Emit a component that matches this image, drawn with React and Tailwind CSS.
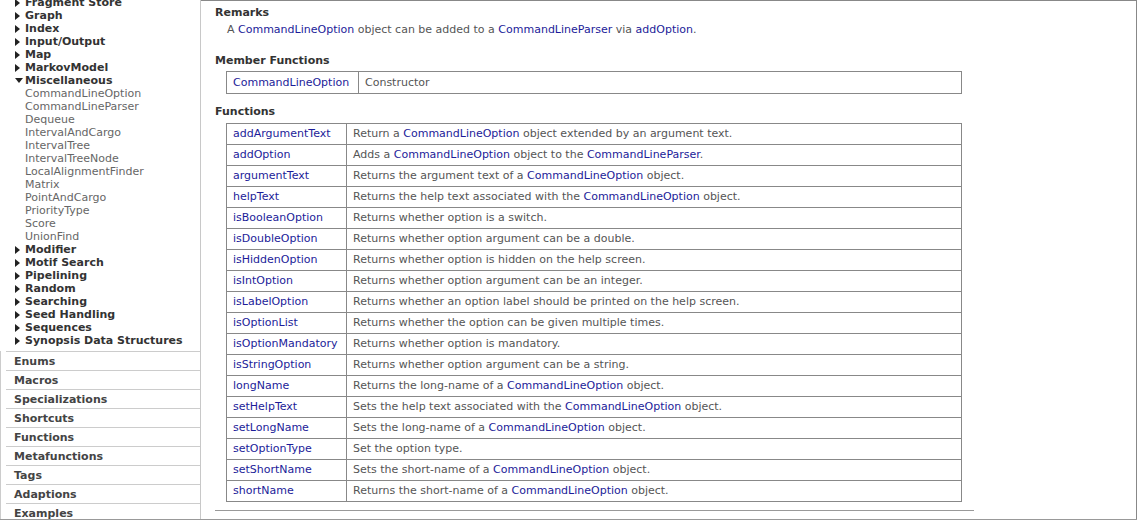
import React from "react";

const L = ({ children }) => <span className="text-[#1c1c99]">{children}</span>;
const CLO = <L>CommandLineOption</L>;

const fns = [
  ["addArgumentText", <>Return a {CLO} object extended by an argument text.</>],
  ["addOption", <>Adds a {CLO} object to the <L>CommandLineParser</L>.</>],
  ["argumentText", <>Returns the argument text of a {CLO} object.</>],
  ["helpText", <>Returns the help text associated with the {CLO} object.</>],
  ["isBooleanOption", <>Returns whether option is a switch.</>],
  ["isDoubleOption", <>Returns whether option argument can be a double.</>],
  ["isHiddenOption", <>Returns whether option is hidden on the help screen.</>],
  ["isIntOption", <>Returns whether option argument can be an integer.</>],
  ["isLabelOption", <>Returns whether an option label should be printed on the help screen.</>],
  ["isOptionList", <>Returns whether the option can be given multiple times.</>],
  ["isOptionMandatory", <>Returns whether option is mandatory.</>],
  ["isStringOption", <>Returns whether option argument can be a string.</>],
  ["longName", <>Returns the long-name of a {CLO} object.</>],
  ["setHelpText", <>Sets the help text associated with the {CLO} object.</>],
  ["setLongName", <>Sets the long-name of a {CLO} object.</>],
  ["setOptionType", <>Set the option type.</>],
  ["setShortName", <>Sets the short-name of a {CLO} object.</>],
  ["shortName", <>Returns the short-name of a {CLO} object.</>],
];

const groupsTop = ["Fragment Store", "Graph", "Index", "Input/Output", "Map", "MarkovModel"];
const misc = [
  "CommandLineOption", "CommandLineParser", "Dequeue", "IntervalAndCargo", "IntervalTree",
  "IntervalTreeNode", "LocalAlignmentFinder", "Matrix", "PointAndCargo", "PriorityType", "Score", "UnionFind",
];
const groupsBottom = ["Modifier", "Motif Search", "Pipelining", "Random", "Searching", "Seed Handling", "Sequences", "Synopsis Data Structures"];
const sections = ["Enums", "Macros", "Specializations", "Shortcuts", "Functions", "Metafunctions", "Tags", "Adaptions", "Examples"];

const Right = () => (
  <svg width="5" height="8" viewBox="0 0 5 8" className="shrink-0">
    <polygon points="0,0 5,4 0,8" fill="#222" />
  </svg>
);
const Down = () => (
  <svg width="8" height="5" viewBox="0 0 8 5" className="shrink-0">
    <polygon points="0,0 8,0 4,5" fill="#222" />
  </svg>
);

const Group = ({ name, open }) => (
  <div className="flex h-[13px] items-center pl-[15px] font-bold text-[#333]">
    <div className="flex w-[10px] items-center">{open ? <Down /> : <Right />}</div>
    <span>{name}</span>
  </div>
);

export default function App() {
  return (
    <div
      className="flex h-[520px] w-[1137px] overflow-hidden border-b border-[#999] bg-white text-[11px]"
      style={{ fontFamily: '"DejaVu Sans", Verdana, sans-serif' }}
    >
      <aside className="flex w-[201px] shrink-0 flex-col overflow-hidden border-r border-[#c8c8c8] leading-[13px]">
        <div className="mt-[-4px]">
          {groupsTop.map((g) => (
            <Group key={g} name={g} />
          ))}
          <Group name="Miscellaneous" open />
          {misc.map((m) => (
            <div key={m} className="h-[13px] pl-[25px] text-[#666]">
              {m}
            </div>
          ))}
          {groupsBottom.map((g) => (
            <Group key={g} name={g} />
          ))}
        </div>
        <div className="mt-[4px] border-l border-[#ccc]">
          {sections.map((s) => (
            <div key={s} className="ml-[5px] flex h-[19px] items-center border-t border-[#ccc] pl-[8px] font-bold text-[#444]">
              {s}
            </div>
          ))}
        </div>
      </aside>
      <main className="flex-1 border-r border-t border-[#888] pl-[14px] pt-[4px] leading-[16px] text-[#555]">
        <div className="font-bold text-[#333]">Remarks</div>
        <p className="mt-[1px] pl-[12px]">
          A {CLO} object can be added to a <L>CommandLineParser</L> via <L>addOption</L>.
        </p>
        <div className="mt-[15px] font-bold text-[#333]">Member Functions</div>
        <table className="ml-[11px] mt-[2px] w-[736px] border-collapse">
          <tbody>
            <tr className="h-[22px]">
              <td className="w-[132px] border border-[#888] px-[6px] py-0">{CLO}</td>
              <td className="border border-[#888] px-[6px] py-0">Constructor</td>
            </tr>
          </tbody>
        </table>
        <div className="mt-[10px] font-bold text-[#333]">Functions</div>
        <table className="ml-[11px] mt-[3px] w-[736px] border-collapse">
          <tbody>
            {fns.map(([n, d]) => (
              <tr key={n} className="h-[21px]">
                <td className="w-[120px] border border-[#888] px-[6px] py-0">
                  <L>{n}</L>
                </td>
                <td className="border border-[#888] px-[6px] py-0">{d}</td>
              </tr>
            ))}
          </tbody>
        </table>
        <div className="mt-[8px] h-px w-[759px] bg-[#999]" />
      </main>
    </div>
  );
}
